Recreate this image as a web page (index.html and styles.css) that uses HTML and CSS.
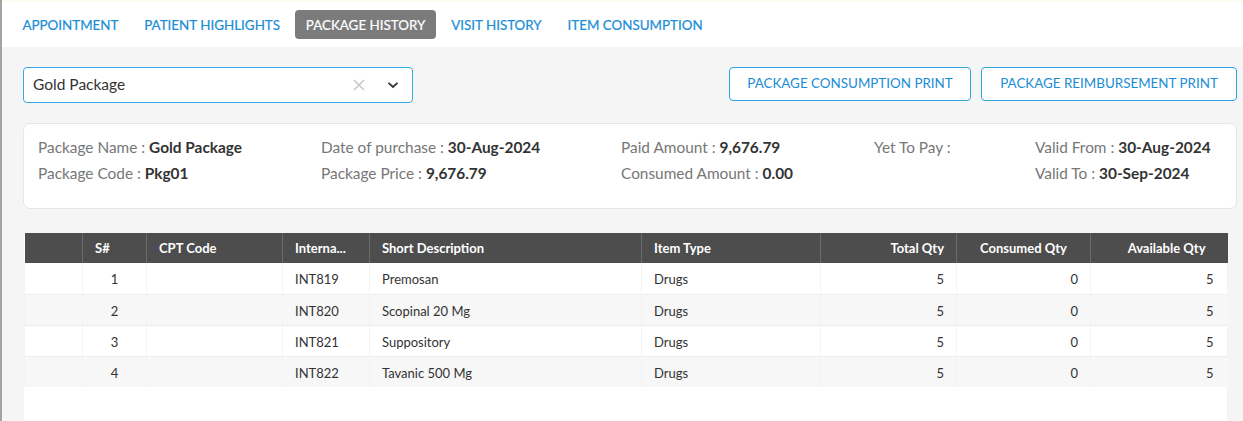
FILE: index.html
```html
<!DOCTYPE html>
<html>
<head>
<meta charset="utf-8">
<link rel="stylesheet" href="styles.css">
</head>
<body>
<div class="topline"></div>
<nav class="tabs">
  <a class="tab">APPOINTMENT</a>
  <a class="tab">PATIENT HIGHLIGHTS</a>
  <a class="tab active">PACKAGE HISTORY</a>
  <a class="tab">VISIT HISTORY</a>
  <a class="tab">ITEM CONSUMPTION</a>
</nav>
<main class="content">
  <div class="toolbar">
    <div class="select">
      <span class="select-value">Gold Package</span>
      <svg class="select-clear" width="12" height="12" viewBox="0 0 12 12"><path d="M1 1 L11 11 M11 1 L1 11" fill="none" stroke="#c8c8c8" stroke-width="1.6"/></svg>
      <svg class="select-arrow" width="12" height="8" viewBox="0 0 12 8"><path d="M1.5 1.8 L6 6 L10.5 1.8" fill="none" stroke="#333" stroke-width="1.8"/></svg>
    </div>
    <div class="actions">
      <button class="btn">PACKAGE CONSUMPTION PRINT</button>
      <button class="btn">PACKAGE REIMBURSEMENT PRINT</button>
    </div>
  </div>
  <section class="card">
    <div class="info">
      <div class="item"><span class="lbl">Package Name : </span><b>Gold Package</b></div>
      <div class="item"><span class="lbl">Date of purchase : </span><b>30-Aug-2024</b></div>
      <div class="item"><span class="lbl">Paid Amount : </span><b>9,676.79</b></div>
      <div class="item"><span class="lbl">Yet To Pay : </span></div>
      <div class="item"><span class="lbl">Valid From : </span><b>30-Aug-2024</b></div>
      <div class="item"><span class="lbl">Package Code : </span><b>Pkg01</b></div>
      <div class="item"><span class="lbl">Package Price : </span><b>9,676.79</b></div>
      <div class="item"><span class="lbl">Consumed Amount : </span><b>0.00</b></div>
      <div class="item"></div>
      <div class="item"><span class="lbl">Valid To : </span><b>30-Sep-2024</b></div>
    </div>
  </section>
  <div class="grid-wrap">
    <table class="grid">
      <colgroup>
        <col style="width:58px"><col style="width:64px"><col style="width:136px"><col style="width:87px"><col style="width:272px"><col style="width:179px"><col style="width:136px"><col style="width:134px"><col style="width:137px">
      </colgroup>
      <thead>
        <tr>
          <th></th><th>S#</th><th>CPT Code</th><th>Interna...</th><th>Short Description</th><th>Item Type</th><th class="r">Total Qty</th><th class="c">Consumed Qty</th><th class="r r2">Available Qty</th>
        </tr>
      </thead>
      <tbody>
        <tr><td></td><td class="c">1</td><td></td><td>INT819</td><td>Premosan</td><td>Drugs</td><td class="r">5</td><td class="r">0</td><td class="r">5</td></tr>
        <tr><td></td><td class="c">2</td><td></td><td>INT820</td><td>Scopinal 20 Mg</td><td>Drugs</td><td class="r">5</td><td class="r">0</td><td class="r">5</td></tr>
        <tr><td></td><td class="c">3</td><td></td><td>INT821</td><td>Suppository</td><td>Drugs</td><td class="r">5</td><td class="r">0</td><td class="r">5</td></tr>
        <tr><td></td><td class="c">4</td><td></td><td>INT822</td><td>Tavanic 500 Mg</td><td>Drugs</td><td class="r">5</td><td class="r">0</td><td class="r">5</td></tr>
      </tbody>
    </table>
  </div>
</main>
</body>
</html>
```

FILE: styles.css
```css
* { box-sizing: border-box; }
html, body { margin: 0; padding: 0; }
body {
  font-family: Lato, "Open Sans", Arial, sans-serif;
  background: #f5f5f5;
  border-left: 2px solid #a4a4a4;
  height: 421px;
  overflow: hidden;
  color: #333;
}
.topline { height: 2px; background: #fbfbf2; }
.tabs {
  height: 45px;
  background: #fff;
  display: flex;
  align-items: center;
  padding-left: 10px;
  gap: 5px;
}
.tab {
  font-size: 13.4px;
  color: #1a8dd6;
  padding: 7px 10.4px 5px;
  border-radius: 4px;
  line-height: 17px;
  -webkit-text-stroke: 0.2px currentColor;
}
.tab.active { background: #7b7b7b; color: #fff; }
.content { padding: 20px 6px 0 21px; }
.toolbar {
  display: flex;
  justify-content: space-between;
  align-items: flex-start;
}
.select {
  width: 390px;
  height: 36px;
  background: #fff;
  border: 1px solid #35aae6;
  border-radius: 4px;
  display: flex;
  align-items: center;
  padding: 0 13px 0 9px;
}
.select-value { font-size: 15.5px; color: #333; flex: 1; line-height: 20px; margin-top: -2px; }
.select-clear { margin-right: 22px; margin-top: -1px; }
.select-arrow { margin-top: -1px; }
.actions { display: flex; gap: 10px; }
.btn {
  font-family: inherit;
  height: 34px;
  background: #fff;
  border: 1px solid #2ba4e2;
  border-radius: 4px;
  color: #1a8dd6;
  font-size: 13.4px;
  padding: 0 0 2px;
  width: 242px;
}
.btn + .btn { width: 256px; }
.card {
  margin-top: 20px;
  background: #fff;
  border: 1px solid #e6e6e6;
  border-radius: 7px;
  height: 86px;
  padding: 10px 14px;
}
.info {
  display: grid;
  grid-template-columns: 283px 300px 253px 161px auto;
  font-size: 15.4px;
  line-height: 26px;
}
.lbl { color: #777; }
.info b { color: #333; font-weight: 700; }
.grid-wrap {
  margin-top: 24px;
  margin-left: 1px;
  width: 1203px;
  background: #fff;
  height: 200px;
}
.grid {
  border-collapse: collapse;
  table-layout: fixed;
  width: 1203px;
  font-size: 13px;
}
.grid th {
  background: #4d4d4d;
  color: #fff;
  font-weight: 700;
  text-align: left;
  height: 30px;
  padding: 0 12px 1px 12px;
  border-left: 1px solid #6b6b6b;
  white-space: nowrap;
}
.grid th:first-child { border-left: none; }
.grid tbody tr { height: 31px; }
.grid td {
  padding: 2px 12px 0 12px;
  line-height: 16px;
  color: #333;
  border-top: 1px solid #eee;
  border-left: 1px solid #f3f3f3;
}
.grid tbody tr:nth-child(even) td { background: #f7f7f7; }
.grid tbody tr:first-child td { border-top: none; }
.grid .r { text-align: right; }
.grid .c { text-align: center; }
.grid th.r2 { padding-right: 22px; }
.grid td:last-child { padding-right: 14px; }
```
